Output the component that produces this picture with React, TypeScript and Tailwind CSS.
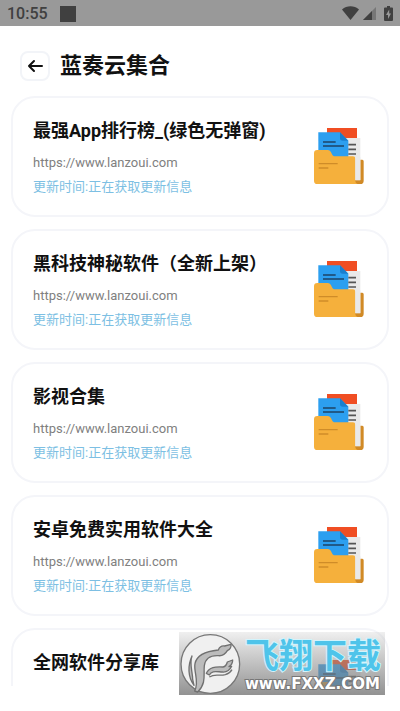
import React from "react";

interface Colecao {
  titulo: string;
  url?: string;
  atualizacao?: string;
}

const infosPadrao = {
  url: "https://www.lanzoui.com",
  atualizacao: "更新时间:正在获取更新信息",
};

const colecoes: Colecao[] = [
  { titulo: "最强App排行榜_(绿色无弹窗)", ...infosPadrao },
  { titulo: "黑科技神秘软件（全新上架）", ...infosPadrao },
  { titulo: "影视合集", ...infosPadrao },
  { titulo: "安卓免费实用软件大全", ...infosPadrao },
  { titulo: "全网软件分享库" },
];

function BarraStatus() {
  return (
    <div className="flex h-[26px] shrink-0 items-center justify-between bg-[#999999] px-[7px] text-[#404040]">
      <div className="flex items-center gap-3 pt-px">
        <span className="text-base font-medium leading-6">10:55</span>
        <span className="size-4 bg-[#404040]"></span>
      </div>
      <div className="flex items-center gap-1">
        <svg className="h-[14px] w-[17px]" viewBox="0 0 17 14" fill="currentColor">
          <path d="M0 3.5C4.8-.9 12.2-.9 17 3.5L8.5 14Z" />
        </svg>
        <svg className="h-[13px] w-[13px]" viewBox="0 0 13 13">
          <path d="M13 0V13H0Z" fill="#777777" />
          <path d="M9 4V13H0Z" fill="currentColor" />
        </svg>
        <svg className="ml-1 h-[15px] w-[9px]" viewBox="0 0 9 15">
          <path d="M3 0H6V1.5H8Q9 1.5 9 2.5V14Q9 15 8 15H1Q0 15 0 14V2.5Q0 1.5 1 1.5H3Z" fill="currentColor" />
          <path d="M5.2 3.5L2 9H4V13L7 7.5H5.2Z" fill="#999999" />
        </svg>
      </div>
    </div>
  );
}

function IconePasta() {
  return (
    <svg className="h-14 w-[50px] shrink-0" viewBox="0 0 150 168">
      <path d="M39 0H129V40H39Z" fill="#f04e23" />
      <path d="M75 30H139V158H75Z" fill="#e9e9e9" />
      <path d="M139 95H145Q149 95 149 100V158Q149 168 139 168H110V156H139Z" fill="#d18a26" />
      <path d="M13 13H78L103 38V95H13Z" fill="#2c9ff0" />
      <path d="M78 13L103 38H86Q78 38 78 30Z" fill="#1a7fce" />
      <path d="M27 42H65M27 54H90" stroke="#1d4466" strokeWidth="4" />
      <path d="M103 50H126M103 64H126M103 78H126" stroke="#555555" strokeWidth="5" />
      <path
        d="M10 66H42Q49 66 52 74Q55 85 64 85H117Q124 85 124 92V158Q124 168 136 168H10Q0 168 0 158V76Q0 66 10 66Z"
        fill="#f5b03c"
      />
      <path d="M124 88H139V157H124Z" fill="#e9e9e9" />
      <path d="M14 107H71M14 120H43" stroke="#cf8c28" strokeWidth="4" />
    </svg>
  );
}

function CartaoColecao({ titulo, url, atualizacao }: Colecao) {
  return (
    <li className="flex min-h-[121px] shrink-0 items-start justify-between rounded-[24px] border-2 border-[#f4f5f9] bg-white pl-5 pr-[23px]">
      <div className="pt-5">
        <h2 className="text-lg font-bold leading-[26px] text-[#111111]">{titulo}</h2>
        {url && <p className="mt-[10px] text-[13px] leading-[18px] text-[#808080]">{url}</p>}
        {atualizacao && (
          <p className="mt-[6px] text-[13px] leading-[18px] text-[#7dbfe3]">{atualizacao}</p>
        )}
      </div>
      <div className="pt-[30px]">
        <IconePasta />
      </div>
    </li>
  );
}

function MarcaDagua() {
  return (
    <div className="absolute bottom-4 right-[15px] flex h-[63px] w-[206px] items-center bg-linear-to-b from-[#cccccc]/30 to-[#777777]/80">
      <svg className="h-[62px] w-[62px] shrink-0" viewBox="0 0 186 186">
        <circle cx="94" cy="93" r="88" fill="#f0f0f0" stroke="#777777" strokeWidth="4" />
        <g fill="#bcbcbc" stroke="#707070" strokeWidth="4" strokeLinejoin="round">
          <path d="M47 174C62 146 43 116 48 92C54 62 88 54 118 51Q123 37 137 39L156 34Q158 46 145 53Q135 70 118 68C96 67 79 76 76 98C73 124 83 151 56 177Z" />
          <path d="M82 121C91 101 109 101 132 102Q142 100 145 87L161 81Q161 94 150 101L158 100Q149 119 130 117C111 116 98 112 91 126Z" />
          <path d="M39 69C30 92 41 116 41 139L45 157C26 131 26 97 39 69Z" />
          <path d="M91 132C108 121 119 130 139 125Q153 121 159 110" fill="none" />
        </g>
      </svg>
      <div className="flex flex-col pl-1 pt-1 whitespace-nowrap">
        <span className="text-[34px] font-bold leading-9 text-[#4fc4ea] [-webkit-text-stroke:2px_#d3f4fc] [paint-order:stroke_fill]">
          飞翔下载
        </span>
        <span className="font-['DejaVu_Sans',sans-serif] text-[15px] font-bold leading-5 text-white [-webkit-text-stroke:2px_#777777] [paint-order:stroke_fill]">
          www.FXXZ.COM
        </span>
      </div>
    </div>
  );
}

export default function App() {
  return (
    <div className="relative flex h-screen flex-col overflow-hidden bg-white font-[Roboto,'Noto_Sans_CJK_SC',sans-serif]">
      <BarraStatus />
      <header className="flex h-[70px] shrink-0 items-center gap-[10px] px-5 pt-[10px]">
        <button
          type="button"
          aria-label="返回"
          className="flex size-[30px] items-center justify-center rounded-lg border-2 border-[#f2f4f8] text-[#111111]"
        >
          <svg className="size-4" viewBox="0 0 16 16" fill="none" stroke="currentColor" strokeWidth="2" strokeLinecap="round" strokeLinejoin="round">
            <path d="M15 8H2M7 3L2 8L7 13" />
          </svg>
        </button>
        <h1 className="text-[22px] font-bold leading-8 text-[#111111]">蓝奏云集合</h1>
      </header>
      <main className="mb-[25px] min-h-0 flex-1 overflow-hidden px-[11px]">
        <ul className="flex flex-col gap-3">
          {colecoes.map((colecao) => (
            <CartaoColecao key={colecao.titulo} {...colecao} />
          ))}
        </ul>
      </main>
      <MarcaDagua />
    </div>
  );
}
